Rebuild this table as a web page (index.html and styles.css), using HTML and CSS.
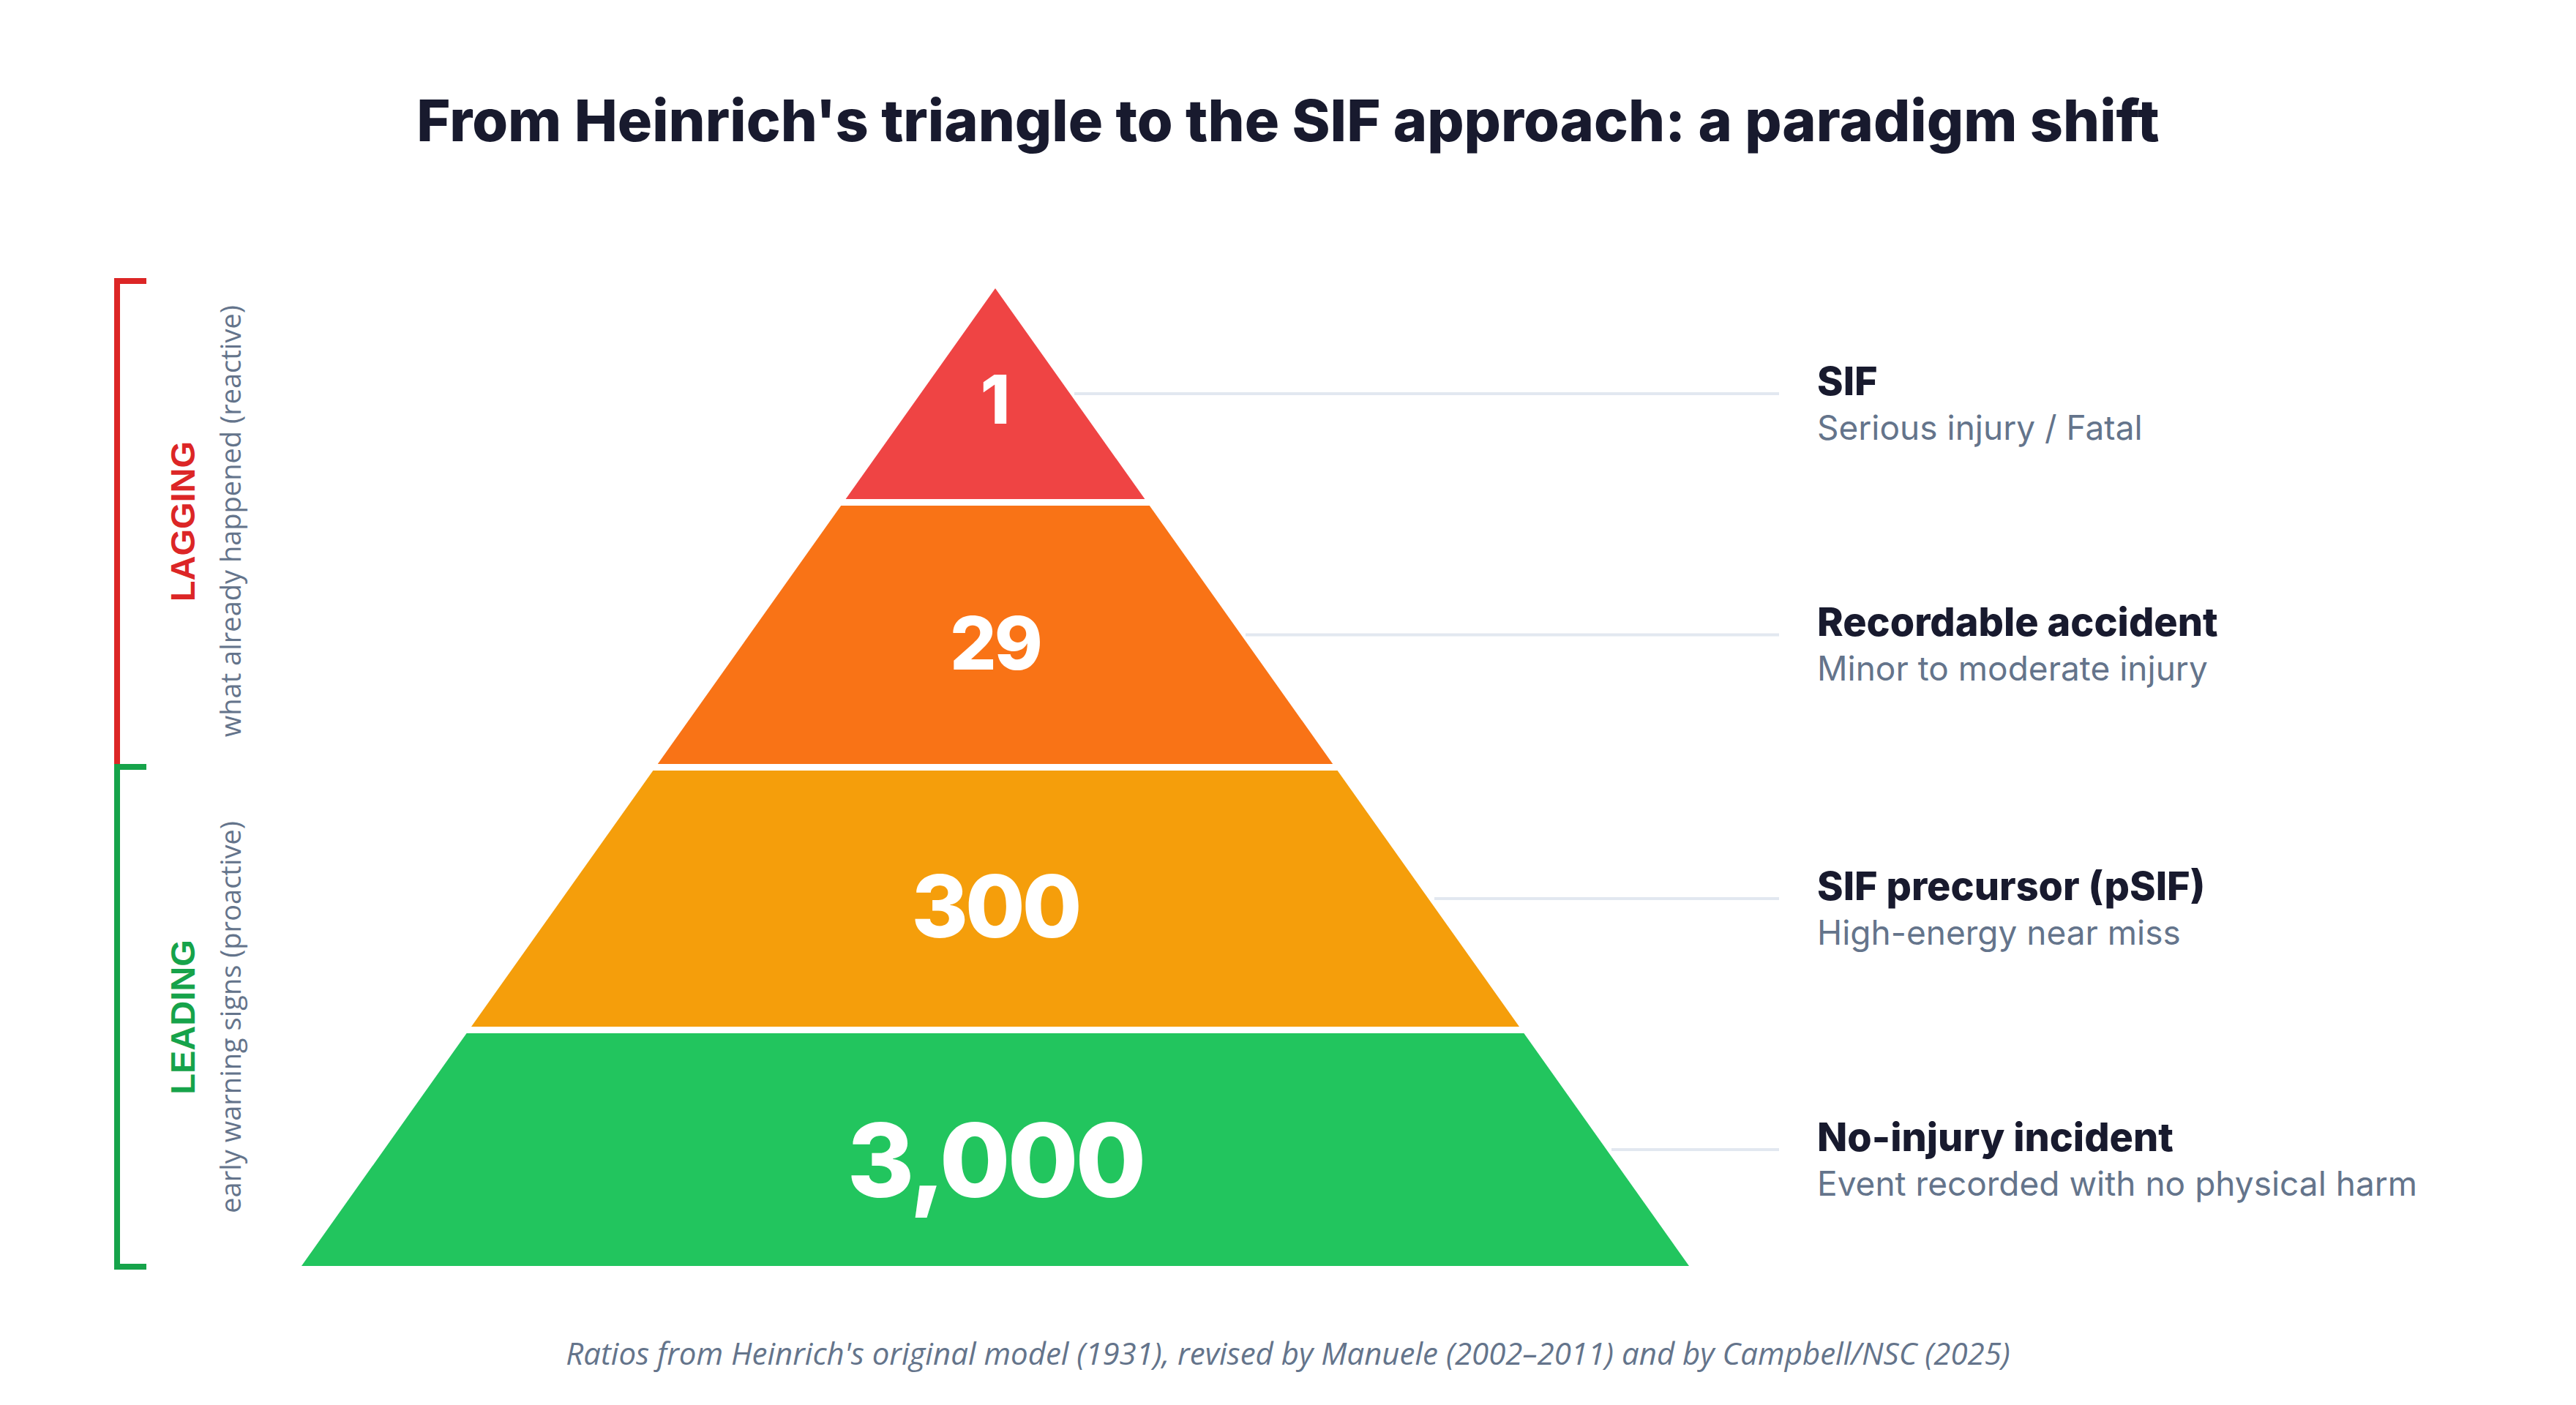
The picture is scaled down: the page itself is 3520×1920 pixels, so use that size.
FILE: index.html
```html
<!DOCTYPE html>
<html lang="en">
<head>
<meta charset="utf-8">
<title>From Heinrich's triangle to the SIF approach</title>
<link rel="stylesheet" href="styles.css">
</head>
<body>
<div class="page">
  <h1 class="title">From Heinrich's triangle to the SIF approach: a paradigm shift</h1>
  <div class="chart">
    <div class="scale">
      <div class="group lagging">
        <div class="bar"></div>
        <div class="vtext">
          <div class="vt-title">LAGGING</div>
          <div class="vt-sub">what already happened (reactive)</div>
        </div>
      </div>
      <div class="group leading">
        <div class="bar"></div>
        <div class="vtext">
          <div class="vt-title">LEADING</div>
          <div class="vt-sub">early warning signs (proactive)</div>
        </div>
      </div>
    </div>
    <svg class="pyramid" width="2019" height="1336" viewBox="0 0 2019 1336">
      <g class="connectors">
        <line x1="1056" y1="144" x2="2019" y2="144"/>
        <line x1="1290" y1="473.5" x2="2019" y2="473.5"/>
        <line x1="1548" y1="834" x2="2019" y2="834"/>
        <line x1="1790" y1="1177" x2="2019" y2="1177"/>
      </g>
      <polygon class="t-red" points="948,0 1152.4,288 743.6,288"/>
      <polygon class="t-orange" points="737.2,297 1158.8,297 1409.2,650 486.8,650"/>
      <polygon class="t-amber" points="480.4,659 1415.6,659 1664,1009 232,1009"/>
      <polygon class="t-green" points="225.6,1018 1670.4,1018 1896,1336 0,1336"/>
      <text class="num n1" x="948" y="185">1</text>
      <text class="num n2" x="948" y="521">29</text>
      <text class="num n3" x="948" y="887">300</text>
      <text class="num n4" x="948" y="1242">3,000</text>
    </svg>
    <div class="labels">
      <div class="label">
        <div class="l-title">SIF</div>
        <div class="l-sub">Serious injury / Fatal</div>
      </div>
      <div class="label">
        <div class="l-title">Recordable accident</div>
        <div class="l-sub">Minor to moderate injury</div>
      </div>
      <div class="label">
        <div class="l-title">SIF precursor (pSIF)</div>
        <div class="l-sub">High-energy near miss</div>
      </div>
      <div class="label">
        <div class="l-title">No-injury incident</div>
        <div class="l-sub">Event recorded with no physical harm</div>
      </div>
    </div>
  </div>
  <p class="footnote">Ratios from Heinrich's original model (1931), revised by Manuele (2002–2011) and by Campbell/NSC (2025)</p>
</div>
</body>
</html>
```
FILE: styles.css
```css
html, body {
  margin: 0;
  padding: 0;
  background: #ffffff;
}
body {
  width: 3520px;
  height: 1920px;
  overflow: hidden;
  font-family: Inter, "Noto Sans", sans-serif;
}
.page {
  display: flex;
  flex-direction: column;
}
.title {
  margin: 116px 0 0;
  text-align: center;
  font-family: Inter, "Noto Sans", sans-serif;
  font-weight: 800;
  font-size: 79px;
  line-height: 97px;
  color: #181a2e;
}
.chart {
  display: flex;
  align-items: flex-start;
  margin-top: 167px;
  padding-left: 156px;
}
.scale {
  width: 256px;
  flex: none;
  display: flex;
  flex-direction: column;
}
.group {
  display: flex;
  align-items: center;
}
.lagging {
  height: 664px;
  color: #dc2626;
}
.leading {
  height: 691px;
  color: #16a34a;
}
.bar {
  align-self: stretch;
  width: 36px;
  border-left: 8px solid currentColor;
  border-top: 8px solid currentColor;
}
.leading .bar {
  border-bottom: 8px solid currentColor;
}
.vtext {
  margin-left: 25px;
  writing-mode: vertical-rl;
  transform: rotate(180deg);
  text-align: center;
  white-space: nowrap;
}
.vt-title {
  font-family: "Liberation Sans", Arial, sans-serif;
  font-weight: 700;
  font-size: 47px;
  line-height: 50px;
}
.vt-sub {
  margin-block-start: 14px;
  font-family: "Open Sans", sans-serif;
  font-weight: 400;
  font-size: 38px;
  line-height: 50px;
  color: #64748b;
}
.pyramid {
  display: block;
  flex: none;
  margin-top: 14px;
}
.connectors line {
  stroke: #e2e8f0;
  stroke-width: 4;
}
.t-red { fill: #ef4444; }
.t-orange { fill: #f97316; }
.t-amber { fill: #f59e0b; }
.t-green { fill: #22c55e; }
.num {
  fill: #ffffff;
  font-family: Inter, "Noto Sans", sans-serif;
  font-weight: 800;
  text-anchor: middle;
}
.n1 { font-size: 92px; }
.n2 { font-size: 100px; letter-spacing: -3px; }
.n3 { font-size: 118px; letter-spacing: -4px; }
.n4 { font-size: 140px; letter-spacing: -4px; }
.labels {
  flex: none;
  margin-top: 14px;
  margin-left: 52px;
  display: grid;
  grid-template-rows: 288px 371px 350px 336px;
}
.label {
  align-self: center;
  padding-top: 25px;
  white-space: nowrap;
}
.l-title {
  font-family: Inter, "Noto Sans", sans-serif;
  font-weight: 800;
  font-size: 54px;
  line-height: 66px;
  color: #181a2e;
}
.l-sub {
  margin-top: 0;
  font-family: Inter, "Noto Sans", sans-serif;
  font-weight: 400;
  font-size: 46px;
  line-height: 60px;
  color: #64748b;
}
.footnote {
  margin: 84px 0 0;
  text-align: center;
  font-family: "Open Sans", sans-serif;
  font-style: italic;
  font-weight: 400;
  font-size: 42px;
  line-height: 52px;
  color: #64748b;
}
```
